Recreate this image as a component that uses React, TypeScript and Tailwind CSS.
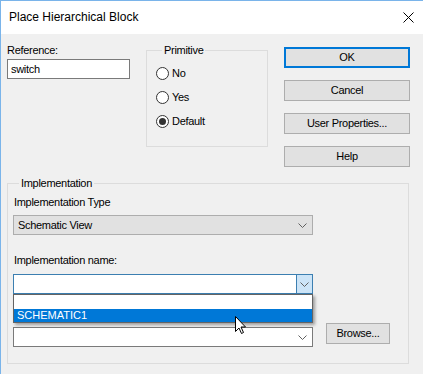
import React from 'react';

const Chevron: React.FC = () => (
  <svg width="9" height="5" viewBox="0 0 9 5" className="block">
    <path d="M0.5 0.5 L4.5 4.5 L8.5 0.5" fill="none" stroke="#606060" strokeWidth="1" />
  </svg>
);

const Radio: React.FC<{ label: string; checked?: boolean }> = ({ label, checked }) => (
  <div className="flex items-center h-[13px]">
    <div className="w-[13px] h-[13px] rounded-full border border-[#333333] bg-white flex items-center justify-center">
      {checked && <div className="w-[7px] h-[7px] rounded-full bg-[#333333]"></div>}
    </div>
    <span className="ml-[3px]">{label}</span>
  </div>
);

const Btn: React.FC<{ label: string; primary?: boolean; className?: string }> = ({ label, primary, className }) => (
  <div
    className={
      'h-[21px] flex items-center justify-center bg-[#e1e1e1] ' +
      (primary ? 'border-2 border-[#0078d7] ' : 'border border-[#adadad] ') +
      (className || '')
    }
  >
    {label}
  </div>
);

const App: React.FC = () => {
  return (
    <div className="w-[423px] h-[374px] overflow-hidden relative bg-[#f0f0f0] border-l border-t border-[#7ab4ea] font-['Liberation_Sans',Arial,sans-serif] text-[11px] leading-[13px] tracking-[-0.3px] text-black">
      {/* title bar */}
      <div className="h-[33px] bg-white flex items-center justify-between pl-[8px] pr-[9px]">
        <span className="text-[12px] leading-[15px] tracking-normal">Place Hierarchical Block</span>
        <svg width="11" height="11" viewBox="0 0 11 11" className="block">
          <path d="M0.5 0.5 L10.5 10.5 M10.5 0.5 L0.5 10.5" stroke="#000" strokeWidth="1" />
        </svg>
      </div>

      {/* top row */}
      <div className="flex pt-[10px] h-[143px]">
        <div className="ml-[6px] w-[123px] flex flex-col">
          <span>Reference:</span>
          <div className="mt-[2px] h-[20px] border border-[#7a7a7a] bg-white pl-[3px] flex items-center">switch</div>
        </div>

        <fieldset className="ml-[16px] w-[122px] h-[103px] border border-[#dcdcdc] pl-[9px] pt-[10px] flex flex-col gap-[11px]">
          <legend className="ml-[6px] px-[2px]">Primitive</legend>
          <Radio label="No" />
          <Radio label="Yes" />
          <Radio label="Default" checked />
        </fieldset>

        <div className="ml-[16px] mt-[3px] w-[126px] flex flex-col gap-[12px]">
          <Btn label="OK" primary />
          <Btn label="Cancel" />
          <Btn label="User Properties..." />
          <Btn label="Help" />
        </div>
      </div>

      {/* implementation group */}
      <fieldset className="ml-[6px] w-[402px] h-[187px] border border-[#dcdcdc] pl-[5px]">
        <legend className="ml-[6px] px-[2px]">Implementation</legend>
        <div className="mt-[6px] ml-[1px]">Implementation Type</div>
        <div className="mt-[6px] w-[300px] h-[20px] border border-[#adadad] bg-[#e1e1e1] flex items-center justify-between pl-[4px] pr-[5px]">
          <span>Schematic View</span>
          <Chevron />
        </div>

        <div className="mt-[19px] ml-[1px]">Implementation name:</div>
        <div className="relative mt-[7px] w-[300px] h-[20px] border border-[#3c7fb1] bg-white flex">
          <div className="flex-1"></div>
          <div className="w-[16px] border-l border-[#3c7fb1] bg-[#cce4f7] flex items-center justify-center">
            <Chevron />
          </div>

          {/* open dropdown list */}
          <div className="absolute left-[-1px] top-[19px] w-[300px] h-[29px] border border-[#646464] bg-white z-10 shadow-[2px_2px_3px_rgba(0,0,0,0.35)] flex flex-col">
            <div className="h-[14px]"></div>
            <div className="h-[13px] bg-[#0078d7] text-white pl-[3px] flex items-center tracking-normal">SCHEMATIC1</div>
          </div>
        </div>

        <div className="flex items-start mt-[29px]">
          <div className="mt-[4px] w-[300px] h-[20px] border border-[#7a7a7a] bg-white flex items-center justify-end pr-[5px]">
            <Chevron />
          </div>
          <Btn label="Browse..." className="ml-[13px] w-[64px]" />
        </div>
      </fieldset>

      {/* mouse pointer */}
      <svg width="13" height="20" viewBox="0 0 13 20" className="absolute left-[234px] top-[315px] z-20">
        <path d="M0.5 0.5 L0.5 15.5 L4 12 L6.5 17.5 L8.5 16.5 L6 11 L10.5 11 Z" fill="#fff" stroke="#000" strokeWidth="1" strokeLinejoin="miter" />
      </svg>
    </div>
  );
};

export default App;
